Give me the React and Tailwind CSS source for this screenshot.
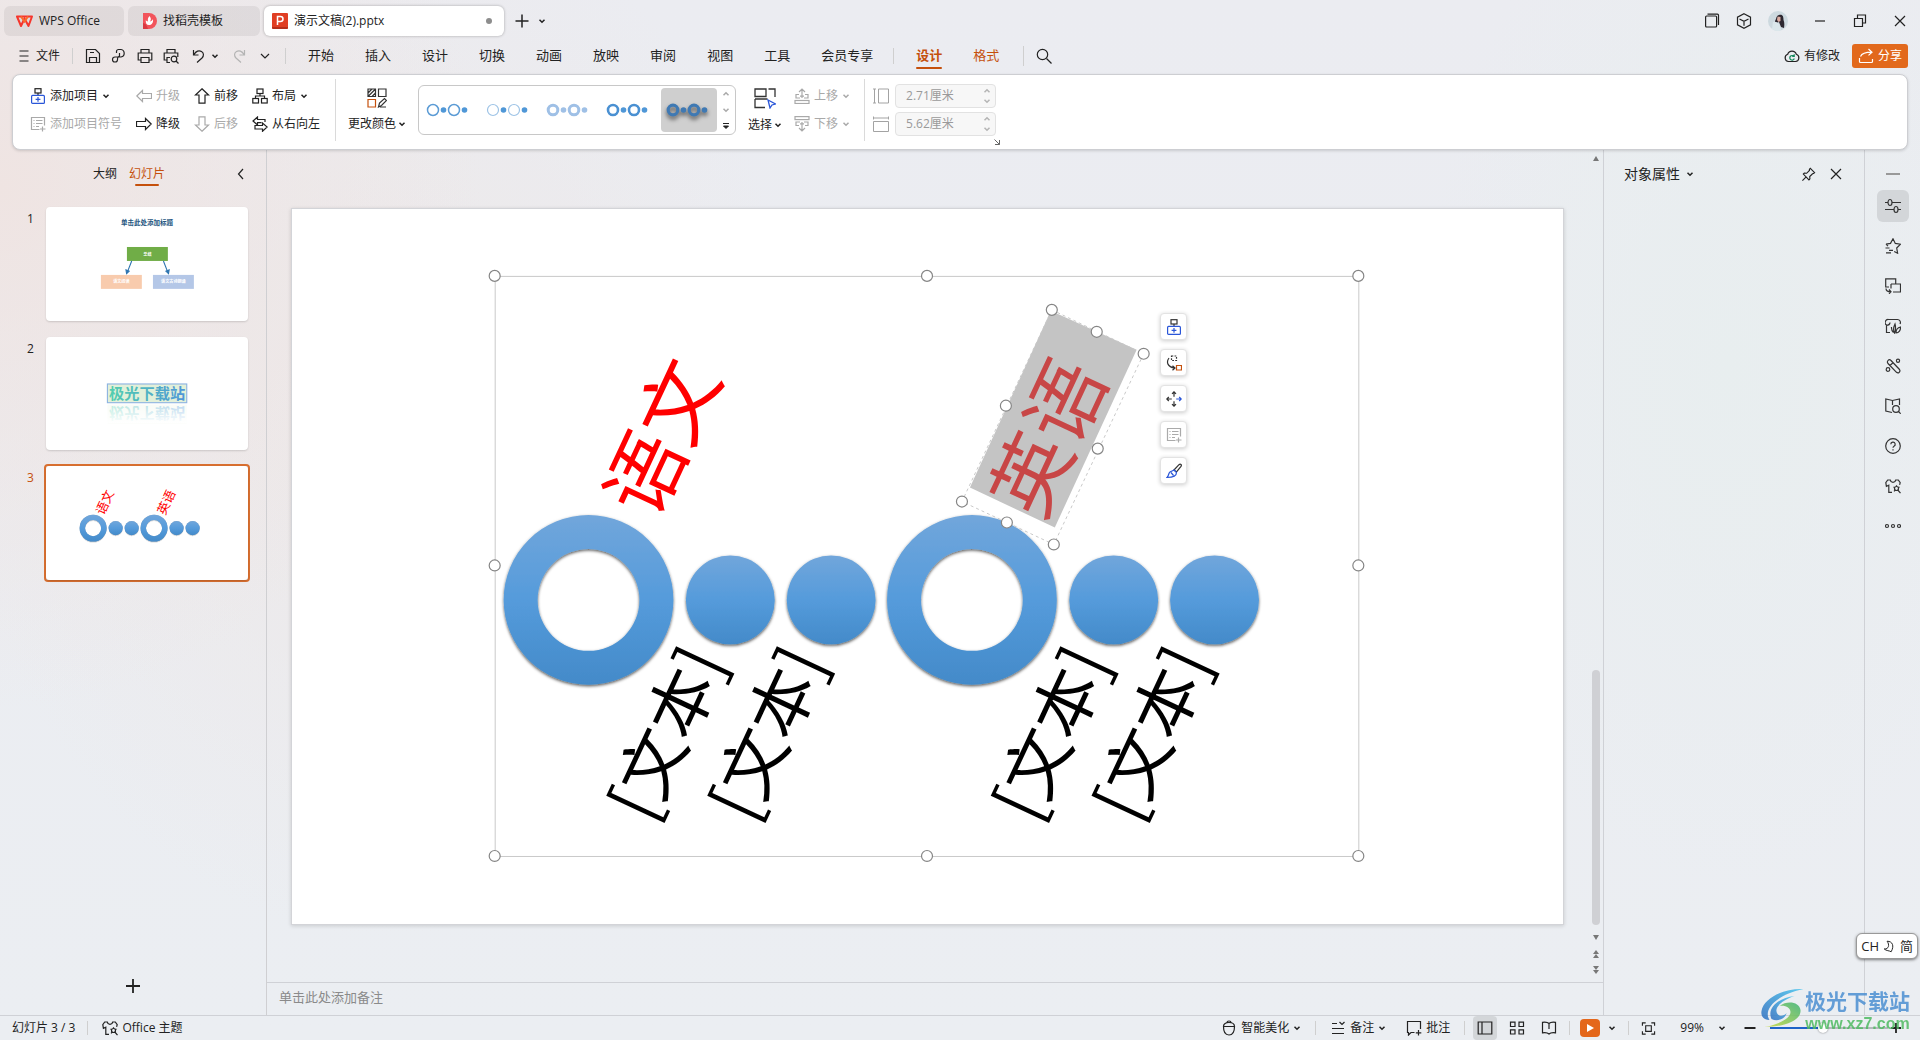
import React, { useState } from "react";

const MENU = ["开始", "插入", "设计", "切换", "动画", "放映", "审阅", "视图", "工具", "会员专享"];

function Icon({ size = 16, className = "", children, sw = 1.2 }) {
  return (
    <svg
      width={size}
      height={size}
      viewBox="0 0 16 16"
      fill="none"
      stroke="currentColor"
      strokeWidth={sw}
      className={`shrink-0 ${className}`}
      aria-hidden="true"
    >
      {children}
    </svg>
  );
}

function Chevron({ className = "" }) {
  return (
    <svg width="8" height="8" viewBox="0 0 8 8" fill="none" stroke="currentColor" strokeWidth="1.5" className={`shrink-0 ${className}`} aria-hidden="true">
      <path d="M1.5 2.7 4 5.2l2.5-2.5" />
    </svg>
  );
}

const addItem = (
  <>
    <rect x="5" y="0.7" width="6" height="4.3" />
    <path d="M8 5v2.5" />
    <g stroke="#2a56d8">
      <rect x="1.6" y="7.4" width="12.8" height="8" rx="1" />
      <path d="M8 9v4.8M5.6 11.4h4.8" />
    </g>
  </>
);

const addBullet = (
  <>
    <path d="M9.5 13.5h-8v-12h13v8" />
    <path d="M3.5 4.5h1M3.5 7.5h1M3.5 10.5h1M6 4.5h6.5M6 7.5h6.5M6 10.5h3M12.5 10.5v5M10 13h5.5" />
  </>
);

const shirt = (
  <>
    <path d="M7 14.3H3.8V7.2L1.4 8.3.8 4.6 2.7 2h2.6c.3 1.6 1.4 2.3 2.7 2.3S10.4 3.6 10.7 2h2.6l1.9 2.6-.6 2.2" />
    <circle cx="11.5" cy="10.5" r="2" />
    <path d="M11.5 7.2v1.3M8.5 9l1.3.6M14.5 9l-1.3.6M9 13.3l1.3-1.3M12.8 12l2.7 3.2" />
  </>
);

const icons = {
  arrowLeft: <path d="M.8 8l5.700-5.500v3h9v5h-9v3z" />,
  arrowRight: <path d="M15.2 8L9.5 2.5v3h-9v5h9v3z" />,
  arrowUp: <path d="M8 .8l6.500 6.200h-3.500v8.200H5V7H1.500z" />,
  arrowDown: <path d="M8 15.2l6.500-6.200h-3.500V.8H5V9H1.500z" />,
  layout: (
    <>
      <rect x="5" y="1" width="6" height="4.500" />
      <rect x=".8" y="10.500" width="5.700" height="4.500" />
      <rect x="9.500" y="10.500" width="5.700" height="4.500" />
      <path d="M8 5.500V8M3.500 10.500V8h9v2.500" />
    </>
  ),
  swap: <path d="M9.500 6.700H5.500V9L1 5l4.500-4v2.500H13V6M10.500 7v2.500H3V13h7.500v2.300L15.200 11z" />,
  moveUp: (
    <>
      <rect x="1" y="12.500" width="14" height="3" />
      <path d="M6 10H2V6.500h3M10 10h4V6.500h-3M8 1v9M5 4l3-3 3 3M6 8.200h4" />
    </>
  ),
  moveDown: (
    <>
      <rect x="1" y="0.600" width="14" height="3" />
      <path d="M6 6H2v3.500h3M10 6h4v3.500h-3M8 6v9M5 12l3 3 3-3M6 7.800h4" />
    </>
  ),
};

function ToolButton({ icon, label, chevron, disabled }) {
  return (
    <button type="button" disabled={disabled} className="flex h-5 items-center whitespace-nowrap text-[#222] disabled:text-[#a9a9a9]">
      <Icon>{icon}</Icon>
      <span className="ml-1">{label}</span>
      {chevron && <Chevron className="ml-1" />}
    </button>
  );
}

function TitleBar() {
  return (
    <header className="flex h-10 items-center pl-1 pt-0.5 text-xs text-[#222]">
      <button type="button" className="flex h-[30px] w-[120px] items-center rounded-md bg-black/6 pl-3">
        <svg width="17" height="13" viewBox="0 0 17 13" fill="none" stroke="#f5352c" strokeWidth="2" aria-hidden="true">
          <path d="M1 1.500h15L12.500 11 8.500 3.500 5 11z" strokeLinejoin="round" />
          <path d="M5 1.500l3.500 5 3.500-5" stroke="#fb6a2a" />
        </svg>
        <span className="ml-1.5">WPS Office</span>
      </button>
      <button type="button" className="ml-1 flex h-[30px] w-[132px] items-center rounded-md bg-black/6 pl-3.5">
        <svg width="15" height="16" viewBox="0 0 15 16" aria-hidden="true">
          <path d="M1 0h6a8 8 0 0 1 0 16H1z" fill="#f2545b" />
          <path d="M1 10c2 0 4 2 5 6H1z" fill="#d93a42" />
          <path d="M7.500 3c2 2.500 1.500 4 .5 5.500 1-.2 2.500-1.200 3-2.500.5 4-1.500 6-4 6S3.500 10 3.800 7c.6 1 1.400 1.400 2.200 1.500C5.500 6.500 6 4.500 7.500 3z" fill="#fff" />
        </svg>
        <span className="ml-1.5">找稻壳模板</span>
      </button>
      <div className="ml-1 flex h-[30px] w-60 items-center rounded-md bg-white pl-2 pr-3 shadow-[0_0_3px_rgba(0,0,0,0.3)]">
        <svg width="16" height="16" viewBox="0 0 16 16" aria-hidden="true">
          <rect width="16" height="16" rx="1" fill="#e03e23" />
          <path d="M0 14h16v1l-1 1H1l-1-1z" fill="#b52f1b" />
          <path d="M5.500 12V3.500h3a2.500 2.500 0 0 1 0 5h-3" fill="none" stroke="#fff" strokeWidth="1.500" />
        </svg>
        <span className="ml-1.5 flex-1">演示文稿(2).pptx</span>
        <span className="h-1.5 w-1.5 rounded-full bg-[#8d8d8d]" />
      </div>
      <button type="button" aria-label="新建标签" className="ml-2.5">
        <Icon sw={1.5}><path d="M8 1.500v13M1.500 8h13" /></Icon>
      </button>
      <button type="button" aria-label="标签列表" className="ml-2"><Chevron /></button>

      <div className="ml-auto flex items-center pr-3">
        <button type="button" aria-label="窗口">
          <Icon><rect x="1.600" y="3" width="11" height="11" rx="1" /><path d="M3.500 1.200h10a1 1 0 0 1 1 1V12" /></Icon>
        </button>
        <button type="button" aria-label="应用" className="ml-4">
          <Icon><path d="M8 .8l6.500 3.400v7.600L8 15.200l-6.500-3.400V4.200zM3.500 6L8 8.300 12.500 6M8 8.300v4.500" /></Icon>
        </button>
        <button type="button" aria-label="账号" className="ml-4">
          <svg width="20" height="20" viewBox="0 0 20 20" aria-hidden="true">
            <circle cx="10" cy="10" r="10" fill="#cdd9df" />
            <path d="M11 4c4-1 4.500 2 4.500 5 1 2 1 5 .5 8l-3-1-2-5c-4 2-5 0-3-3 .5-2 1-3.500 3-4z" fill="#2d2730" />
            <path d="M9.500 5.500l3 .5v4l-2 1-1.500-2z" fill="#d9aba0" />
            <path d="M5 11c3-1 6 1 7 4l1 4.500A10 10 0 0 1 4 18z" fill="#dbe7eb" />
          </svg>
        </button>
        <button type="button" aria-label="最小化" className="ml-6">
          <Icon><path d="M3 8h10" /></Icon>
        </button>
        <button type="button" aria-label="还原" className="ml-6">
          <Icon><path d="M2.500 5.500h8v8h-8zM5.500 5.500v-3.500h8v8h-3" /></Icon>
        </button>
        <button type="button" aria-label="关闭" className="ml-6">
          <Icon><path d="M3 3l10 10M13 3L3 13" /></Icon>
        </button>
      </div>
    </header>
  );
}

function MenuBar() {
  return (
    <nav className="flex h-[34px] items-center pb-0.5 pl-4 pr-3 text-xs text-[#222]">
      <button type="button" className="flex items-center">
        <Icon><path d="M3.500 3h9M3.500 8h9M3.500 13h9" /></Icon>
        <span className="ml-1">文件</span>
      </button>
      <span className="ml-3 h-4 w-px bg-[#cfcfcf]" />
      <div className="flex items-center">
        <button type="button" aria-label="保存" className="ml-3">
          <Icon><path d="M1.500 1.500h9l4 4v9h-13zM4.500 14.500v-5h7v5M5 4.500h4" /></Icon>
        </button>
        <button type="button" aria-label="输出" className="ml-2.5">
          <Icon><path d="M5.500 5V3.500a2 2 0 0 1 2-2h2.500a3.800 3.800 0 0 1 0 7.500H4a2.500 2.500 0 1 0 2.500 2.700c.2-1.700-.7-2.500 2-3.700V5" /></Icon>
        </button>
        <button type="button" aria-label="打印" className="ml-2.5">
          <Icon><path d="M4 5V1.500h8V5M4 12H1.200V5h13.600v7H12M4 9.500h8v5H4z" /></Icon>
        </button>
        <button type="button" aria-label="打印预览" className="ml-2.5">
          <Icon><path d="M4 5V1.500h8V5M4 12H1.200V5h13.600v4M7 14.500H4v-5h3" /><circle cx="11" cy="11" r="2.800" /><path d="M13 13l2.500 2.500" /></Icon>
        </button>
        <button type="button" aria-label="撤销" className="ml-3 flex items-center">
          <Icon><path d="M2.500 2v5h5M3 6.500C5 3 8 2 10.500 3.500S13 8 11 10l-5 4.500" /></Icon>
          <Chevron className="ml-1" />
        </button>
        <button type="button" aria-label="恢复" disabled className="ml-3 text-[#b4b4b4]">
          <Icon><path d="M13.500 2v5h-5M13 6.500C11 3 8 2 5.500 3.500S3 8 5 10l5 4.500" /></Icon>
        </button>
        <button type="button" aria-label="更多" className="ml-2.5">
          <Icon><path d="M4 6l4 4 4-4" /></Icon>
        </button>
      </div>
      <span className="ml-3 h-4 w-px bg-[#cfcfcf]" />
      <div className="ml-[22px] flex items-center gap-[31px] text-[13px]">
        {MENU.map((m) => (
          <button key={m} type="button" className="whitespace-nowrap">{m}</button>
        ))}
      </div>
      <span className="ml-5 h-4 w-px bg-[#cfcfcf]" />
      <div className="ml-[22px] flex items-center gap-[31px] text-[13px] text-[#c5500c]">
        <button type="button" className="relative whitespace-nowrap font-bold">
          设计
          <span className="absolute inset-x-0 -bottom-1 h-0.5 rounded bg-[#c5500c]" />
        </button>
        <button type="button" className="whitespace-nowrap">格式</button>
      </div>
      <span className="ml-6 h-5 w-px bg-[#cfcfcf]" />
      <button type="button" aria-label="搜索" className="ml-3">
        <Icon><circle cx="6.500" cy="6.500" r="5.200" /><path d="M10.500 10.500l5 5" /></Icon>
      </button>
      <button type="button" className="ml-auto flex items-center">
        <Icon>
          <path d="M4.500 13.500a3.700 3.700 0 0 1-.8-7.200 4.500 4.500 0 0 1 8.600 0 3.700 3.700 0 0 1-.8 7.200z" />
          <path d="M10 8.500a2.300 2.300 0 1 0 .3 2M8.200 8.300h2V6.300" stroke="#12875a" />
        </Icon>
        <span className="ml-1">有修改</span>
      </button>
      <button type="button" className="ml-3 flex h-6 w-14 items-center justify-center rounded-[3px] bg-[#e2691c] text-white">
        <Icon><path d="M1.500 10v3.500a1 1 0 0 0 1 1h11a1 1 0 0 0 1-1V11M2.500 8.500C4 5 8 4.200 13.500 4.200M10.500 1l3.500 3.200-3.500 3.200" /></Icon>
        <span className="ml-1">分享</span>
      </button>
    </nav>
  );
}

const STYLES = [
  { name: "样式1", ring: "#5b9bd5", w: 1.5, r: 5.5 },
  { name: "样式2", ring: "#9dc3e6", w: 1.2, r: 5.5 },
  { name: "样式3", ring: "#9fc0e6", w: 3, r: 4.8, dot: "#9fc0e6" },
  { name: "样式4", ring: "#4a90d2", w: 2.6, r: 5 },
  { name: "样式5", ring: "#3f79b3", w: 3.2, r: 4.8, dot: "#3f79b3", shadow: true },
];

function Gallery() {
  const [picked, setPicked] = useState(4);
  return (
    <div className="flex h-[50px] items-center rounded-md border border-[#c8c8c8] pl-0.5">
      <div className="flex gap-1">
        {STYLES.map((s, i) => (
          <button
            key={s.name}
            type="button"
            aria-label={s.name}
            onClick={() => setPicked(i)}
            className={`flex h-11 w-14 items-center rounded ${picked === i ? "bg-[#cfcfcf]" : ""}`}
          >
            <svg
              width="46"
              height="18"
              viewBox="0 0 46 18"
              className={s.shadow ? "ml-1 drop-shadow-[0_3px_2px_rgba(0,0,0,0.6)]" : "ml-1"}
              aria-hidden="true"
            >
              <g fill="none" stroke={s.ring} strokeWidth={s.w}>
                <circle cx="8" cy="9" r={s.r} />
                <circle cx="29" cy="9" r={s.r} />
              </g>
              <circle cx="18.500" cy="9" r="2.800" fill={s.dot || "#4f97d7"} />
              <circle cx="39.500" cy="9" r="2.800" fill={s.dot || "#4f97d7"} />
            </svg>
          </button>
        ))}
      </div>
      <div className="flex w-[18px] flex-col items-center gap-2 text-[#aaa]">
        <button type="button" aria-label="上一行"><Chevron className="rotate-180" /></button>
        <button type="button" aria-label="下一行"><Chevron /></button>
        <button type="button" aria-label="更多样式" className="text-[#222]">
          <svg width="8" height="8" viewBox="0 0 8 8" aria-hidden="true"><path d="M1 1.500h6M1.500 4h5L4 6.500z" fill="currentColor" stroke="currentColor" /></svg>
        </button>
      </div>
    </div>
  );
}

function SizeField({ id, label, value, icon }) {
  return (
    <div className="flex items-center text-[#a3a3a3]">
      <label htmlFor={id} aria-label={label}><Icon sw={1}>{icon}</Icon></label>
      <div className="ml-1.5 flex h-6 w-[101px] items-center rounded border border-[#e2e2e2] bg-[#f7f7f7] pr-1">
        <input id={id} defaultValue={value} disabled className="w-full min-w-0 bg-transparent pl-2.5 text-[#9a9a9a] outline-none" />
        <span className="flex flex-col gap-0.5 text-[#b5b5b5]">
          <Chevron className="rotate-180" />
          <Chevron />
        </span>
      </div>
    </div>
  );
}

function Ribbon() {
  return (
    <section className="relative z-10 mx-3 flex h-[76px] rounded-lg border border-[#cdced2] bg-white pb-2 pt-1 pl-[17px] text-xs shadow-[0_1px_3px_rgba(0,0,0,0.15)]">
      <div className="flex w-[106px] flex-col justify-center gap-2">
        <ToolButton icon={addItem} label="添加项目" chevron />
        <ToolButton icon={addBullet} label="添加项目符号" disabled />
      </div>
      <div className="flex w-[58px] flex-col justify-center gap-2">
        <ToolButton icon={icons.arrowLeft} label="升级" disabled />
        <ToolButton icon={icons.arrowRight} label="降级" />
      </div>
      <div className="flex w-[58px] flex-col justify-center gap-2">
        <ToolButton icon={icons.arrowUp} label="前移" />
        <ToolButton icon={icons.arrowDown} label="后移" disabled />
      </div>
      <div className="flex w-[83px] flex-col justify-center gap-2">
        <ToolButton icon={icons.layout} label="布局" chevron />
        <ToolButton icon={icons.swap} label="从右向左" />
      </div>
      <div className="w-px bg-[#dadada]" />
      <button type="button" className="ml-3 flex flex-col items-center justify-center gap-2 text-[#222]">
        <svg width="20" height="20" viewBox="0 0 20 20" fill="none" stroke="#333" strokeWidth="1.200" aria-hidden="true">
          <path d="M1 1h7.500v7.500H1zM1 5l4-4M1 8.500L8.500 1M5 8.500L8.500 5M11.500 1H19v7.500h-7.500z" />
          <path d="M1 11.500h7.500V19H1z" stroke="#c5500c" />
          <path d="M11.500 19l1-4 5-4.500 2 2-5 5zM13 19h6" />
        </svg>
        <span className="flex items-center leading-4">更改颜色<Chevron className="ml-0.5" /></span>
      </button>
      <div className="ml-3 flex items-center"><Gallery /></div>
      <button type="button" className="ml-3 flex flex-col items-center justify-center gap-2 text-[#222]">
        <svg width="22" height="21" viewBox="0 0 22 21" fill="none" stroke="#333" strokeWidth="1.300" aria-hidden="true">
          <path d="M1 1h11v7.500H1zM14.500 1H21v8M1 11v8.500h10M1 11h12.500" />
          <path d="M14 12l7.500 4-3.500 1-2 3z" stroke="#2a56d8" />
        </svg>
        <span className="flex items-center leading-4">选择<Chevron className="ml-0.5" /></span>
      </button>
      <div className="ml-3 flex flex-col justify-center gap-2">
        <ToolButton icon={icons.moveUp} label="上移" chevron disabled />
        <ToolButton icon={icons.moveDown} label="下移" chevron disabled />
      </div>
      <div className="ml-3.5 w-px bg-[#dadada]" />
      <div className="relative ml-2 flex flex-col justify-center gap-1">
        <SizeField id="shape-h" label="高度" value="2.71厘米" icon={<path d="M1.500 1v14M0 1h3M0 15h3M5.500 1h10v14h-10z" />} />
        <SizeField id="shape-w" label="宽度" value="5.62厘米" icon={<path d="M.5 2h15M.5 .5v3M15.500 .5v3M.5 5.500h15v10H.5z" />} />
        <svg width="6" height="6" viewBox="0 0 6 6" className="absolute -bottom-1 -right-1 text-[#666]" fill="none" stroke="currentColor" aria-hidden="true">
          <path d="M.5 .5l5 5M5.500 1v4.500H1" />
        </svg>
      </div>
    </section>
  );
}

// Smart art drawing, shared by the slide and its thumbnail
function SmartArt({ id, full }) {
  const groups = [0, 384];
  const labels = [376, 477, 761, 862];
  return (
    <>
      <defs>
        <linearGradient id={`${id}-blue`} x1="0" y1="0" x2="0" y2="1">
          <stop offset="0" stopColor="#71a6db" />
          <stop offset="0.5" stopColor="#559bdb" />
          <stop offset="1" stopColor="#438ac9" />
        </linearGradient>
        <filter id={`${id}-shadow`} x="-10%" y="-10%" width="120%" height="120%">
          <feDropShadow dx="0" dy="1.5" stdDeviation="1.5" floodColor="#000" floodOpacity="0.65" />
        </filter>
      </defs>
      {groups.map((dx) => (
        <g key={dx} transform={`translate(${dx} 0)`} fill={`url(#${id}-blue)`} filter={`url(#${id}-shadow)`}>
          <path
            fillRule="evenodd"
            d="M212 391.500a85 85 0 1 1 170 0a85 85 0 1 1 -170 0zM246 391.500a51 51 0 1 0 102 0a51 51 0 1 0 -102 0z"
          />
          <circle cx="439" cy="391.500" r="44.500" />
          <circle cx="540" cy="391.500" r="44.500" />
        </g>
      ))}
      {full && <path d="M760 102l86 39-82 178-85-40z" fill="#c4c4c4" />}
      <g textAnchor="middle" fontSize="80">
        <text transform="translate(371 229) rotate(-65)" y="29" fill="#ff0000">语文</text>
        <text transform="translate(758 229) rotate(-65)" y="29" fill={full ? "#c84646" : "#ff0000"}>英语</text>
      </g>
      {full && (
        <g textAnchor="middle" fontSize="67" fill="#000">
          {labels.map((x) => (
            <text key={x} transform={`translate(${x} 525) rotate(-65)`} y="24">[文本]</text>
          ))}
        </g>
      )}
    </>
  );
}

const OUTER = [[203, 67], [636, 67], [1068, 67], [203, 357], [1068, 357], [203, 648], [636, 648], [1068, 648]];
const INNER = [[761, 101], [806, 123], [853, 145], [715, 197], [807, 240], [671, 293], [716, 314], [763, 336]];

function Slide() {
  return (
    <div className="relative">
      <svg
        viewBox="0 0 1273 716"
        className="block w-full border border-[#d3d4d8] bg-white font-['Noto_Sans_CJK_SC',sans-serif] shadow-[0_1px_4px_rgba(0,0,0,0.15)]"
      >
        <SmartArt id="slide" full />
        <rect x="203.500" y="67.500" width="865" height="581" fill="none" stroke="#c9c9c9" />
        <path d="M761 101l92 44-90 191-92-43z" fill="none" stroke="#c9c9c9" strokeDasharray="3 3" />
        <g fill="#fff" stroke="#858585" strokeWidth="1.200">
          {[...OUTER, ...INNER].map(([x, y]) => (
            <circle key={`${x}-${y}`} cx={x} cy={y} r="5.500" />
          ))}
        </g>
      </svg>
      <div className="absolute left-[68.3%] top-[14.7%] flex flex-col gap-[9px] text-[#333]">
        <FloatButton label="添加项目">{addItem}</FloatButton>
        <FloatButton label="更改位置">
          <path d="M5.500 1h5v4.500h-5z" strokeDasharray="1.800 1.200" />
          <path d="M3 3C0 7 1.500 12 8.500 13M6.500 10.800L9 13l-2.500 2.200" />
          <path d="M10.500 10.500h5V15h-5z" stroke="#c5500c" />
        </FloatButton>
        <FloatButton label="移动">
          <path d="M8 .8v5M6 2.800l2-2 2 2M8 10.200v5M6 13.200l2 2 2-2M.8 8h5M2.800 6l-2 2 2 2" />
          <path d="M10.200 8h5M13.200 6l2 2-2 2" stroke="#2a56d8" />
        </FloatButton>
        <FloatButton label="项目符号" gray>{addBullet}</FloatButton>
        <FloatButton label="样式">
          <path d="M8 7l5-5.300c1.500-1.300 3 .2 2 1.700L10.500 9z" />
          <path d="M8 7l2.500 2.500c0 3.500-3 5-9.500 5 2-1.500 1-4 3-5.500C5.500 8 6.500 8 8 7zM5 9.500l2.500 3" stroke="#2a56d8" />
        </FloatButton>
      </div>
    </div>
  );
}

function FloatButton({ label, gray, children }) {
  return (
    <button
      type="button"
      aria-label={label}
      className={`flex h-[27px] w-[27px] items-center justify-center rounded border border-[#e3e3e3] bg-white shadow-[0_1px_4px_rgba(0,0,0,0.2)] ${gray ? "text-[#aaa]" : ""}`}
    >
      <Icon>{children}</Icon>
    </button>
  );
}

function Thumb({ n, active, children }) {
  return (
    <li className="flex items-start">
      <span className={`w-[44px] shrink-0 pl-[27px] pt-1.5 text-xs ${active ? "text-[#c5500c]" : "text-[#222]"}`}>{n}</span>
      <button
        type="button"
        aria-label={`幻灯片 ${n}`}
        className={`w-[206px] rounded border-2 ${active ? "border-[#d86f30]" : "border-transparent"}`}
      >
        <svg viewBox="0 0 1273 716" className="block w-full rounded-sm bg-white font-['Noto_Sans_CJK_SC',sans-serif] shadow-[0_1px_2px_rgba(0,0,0,0.15)]">
          {children}
        </svg>
      </button>
    </li>
  );
}

function LeftPanel() {
  return (
    <aside className="flex w-[267px] shrink-0 flex-col border-r border-[#cfcfd2]">
      <div className="flex h-12 items-center pl-[93px] pr-[17px] text-xs text-[#222]">
        <button type="button">大纲</button>
        <button type="button" className="relative ml-3 text-[#c5500c]">
          幻灯片
          <span className="absolute inset-x-1.5 -bottom-1 h-0.5 rounded bg-[#c5500c]" />
        </button>
        <button type="button" aria-label="收起" className="ml-auto">
          <Icon><path d="M10 3L5.500 8l4.500 5" /></Icon>
        </button>
      </div>
      <ul className="mt-[7px] flex flex-col gap-3">
        <Thumb n={1}>
          <text x="636" y="115" textAnchor="middle" fontSize="41" fontWeight="bold" fill="#24557e">单击此处添加标题</text>
          <rect x="510" y="252" width="258" height="88" fill="#70ad47" />
          <rect x="346" y="428" width="258" height="88" fill="#f8cbad" />
          <rect x="674" y="428" width="258" height="88" fill="#b4c7e7" />
          <g stroke="#2e75b0" strokeWidth="7" fill="#2e75b0">
            <path d="M540 340l-28 72M740 340l28 72" />
            <path d="M504 396l4 24 16-16zM776 396l-4 24-16-16z" />
          </g>
          <g fill="#fff" fontSize="26" textAnchor="middle" fontWeight="bold">
            <text x="639" y="306">总结</text>
            <text x="475" y="482">语文阅读</text>
            <text x="803" y="482">语文古诗朗诵</text>
          </g>
        </Thumb>
        <Thumb n={2}>
          <defs>
            <linearGradient id="wordart" x1="0" y1="0" x2="1" y2="0">
              <stop offset="0" stopColor="#53cfae" />
              <stop offset="1" stopColor="#4f96d8" />
            </linearGradient>
            <linearGradient id="fade" x1="0" y1="0" x2="0" y2="1">
              <stop offset="0" stopColor="#fff" stopOpacity="0.6" />
              <stop offset="1" stopColor="#fff" />
            </linearGradient>
          </defs>
          <rect x="387" y="296" width="500" height="118" fill="#e2f0d9" stroke="#8db3e0" strokeWidth="7" />
          <text x="637" y="390" textAnchor="middle" fontSize="96" fontWeight="bold" fill="url(#wordart)">极光下载站</text>
          <g transform="translate(0 840) scale(1 -1)">
            <rect x="387" y="296" width="500" height="118" fill="#eef6ea" />
            <text x="637" y="390" textAnchor="middle" fontSize="96" fontWeight="bold" fill="url(#wordart)" aria-hidden="true">极光下载站</text>
          </g>
          <rect x="375" y="422" width="524" height="124" fill="url(#fade)" />
        </Thumb>
        <Thumb n={3} active><SmartArt id="thumb" /></Thumb>
      </ul>
      <button type="button" aria-label="新建幻灯片" className="mb-[21px] mt-auto self-center text-[#222]">
        <Icon sw={1.8}><path d="M8 1v14M1 8h14" /></Icon>
      </button>
    </aside>
  );
}

function ScrollBar() {
  return (
    <div className="flex w-[15px] shrink-0 flex-col items-center pb-2 pt-1.5 text-[#777]">
      <svg width="6" height="5" viewBox="0 0 6 5" fill="currentColor" aria-hidden="true"><path d="M3 0l3 5H0z" /></svg>
      <div className="flex-[2]" />
      <div className="w-2 flex-1 rounded bg-[#cfd0d4]" />
      <svg width="6" height="5" viewBox="0 0 6 5" fill="currentColor" className="mt-2.5" aria-hidden="true"><path d="M3 5l3-5H0z" /></svg>
      <svg width="6" height="8" viewBox="0 0 6 8" fill="currentColor" className="mt-2.5" aria-hidden="true"><path d="M3 0l3 4H0zM3 4l3 4H0z" /></svg>
      <svg width="6" height="8" viewBox="0 0 6 8" fill="currentColor" className="mt-2" aria-hidden="true"><path d="M3 4l3-4H0zM3 8l3-4H0z" /></svg>
    </div>
  );
}

const SIDE = [
  { label: "属性", icon: <><path d="M0 4.500h3M7 4.500h9M0 11.500h9M13 11.500h3" /><ellipse cx="5" cy="4.500" rx="2" ry="3" /><ellipse cx="11" cy="11.500" rx="2" ry="3" /></> },
  { label: "动画", icon: <path d="M1 6.200l4.500-.8L8 .8l2.300 4.600 5.200.8-3.800 3.800.9 5.200-3.400-1.700M1 6.200l2 2M.5 10h4M4 12.300h4M1 14.800h5" /> },
  { label: "切换", icon: <path d="M4 9H.7V.8h10V6M6 6h9.500v8H8M6 6v4.500M1 10.500C1 13 3 13.800 6 13.800M4 11.500l2 2.300-2 2" /> },
  { label: "模板", icon: <><path d="M5 14.500H1.500V7A3 3 0 0 1 3.500 1.500h9A3 3 0 0 1 15 6M1 7.500c2.500 0 4-1.500 4-3" /><path d="M9.500 15c-1.500-3-1.500-5 .5-9 1 4 1 6-.5 9zM11 15c0-3 2-5.500 4.500-6 .3 3-1.500 6-4.500 6zM8.500 14.500C7 13 6.300 11 6.500 9" /></> },
  { label: "美化", icon: <><path d="M3 2.500c1-1.300 2-1.300 3 0l8.500 9c.8 1.200.5 2-.3 2.800s-1.800.8-2.700 0L3 5.500c-.8-1-.8-2 0-3zM5 7.500L8 4.700" /><circle cx="13" cy="2.800" r="1.600" /><circle cx="3" cy="11.500" r="1.800" /></> },
  { label: "素材", icon: <><path d="M7 14.500L.8 13V1l6.700 1.500L14.500 1v6M7.500 2.500V7" /><circle cx="11" cy="11" r="3.300" /><path d="M13.500 13.500l2.200 2.200" /></> },
  { label: "帮助", icon: <><circle cx="8" cy="8" r="7.300" /><path d="M5.800 6.200a2.200 2.200 0 1 1 3.200 2c-.8.500-1 .8-1 1.600M8 11.300v1.200" /></> },
  { label: "主题", icon: shirt },
  { label: "更多", icon: <><circle cx="2" cy="8" r="1.500" /><circle cx="8" cy="8" r="1.500" /><circle cx="14" cy="8" r="1.500" /></> },
];

function RightPanels() {
  return (
    <>
      <aside className="w-[261px] shrink-0 border-l border-[#cfd1d6]">
        <div className="flex h-12 items-center pl-5 pr-5 text-[#222]">
          <button type="button" className="flex items-center text-sm">
            对象属性
            <Chevron className="ml-1.5" />
          </button>
          <button type="button" aria-label="固定" className="ml-auto">
            <Icon size={15}><path d="M10 1.500L14.500 6l-1.200 1-1 .2-3 3 .2 2.500-1 1L2.500 7.500l1-1L6 6.700l3-3V2.500zM5.500 10.500L1.500 14.500" /></Icon>
          </button>
          <button type="button" aria-label="关闭面板" className="ml-3">
            <Icon><path d="M3 3l10 10M13 3L3 13" /></Icon>
          </button>
        </div>
      </aside>
      <aside className="flex w-14 shrink-0 flex-col items-center border-l border-[#cfd1d6] text-[#333]">
        <span className="mb-[15px] mt-[23px] h-0.5 w-3.5 bg-[#999]" />
        <div className="flex flex-col gap-2">
          {SIDE.map((s, i) => (
            <button key={s.label} type="button" aria-label={s.label} className={`flex h-8 w-8 items-center justify-center rounded-md ${i === 0 ? "bg-[#d3d6d9]" : ""}`}>
              <Icon>{s.icon}</Icon>
            </button>
          ))}
        </div>
      </aside>
    </>
  );
}

function StatusBar() {
  const [zoom, setZoom] = useState(44);
  return (
    <footer className="flex h-[25px] items-center border-t border-[#cfd1d6] pl-3 pr-4 text-xs text-[#222]">
      <span>幻灯片 3 / 3</span>
      <span className="ml-3 h-3.5 w-px bg-[#cfcfcf]" />
      <button type="button" className="ml-3.5 flex items-center">
        <Icon>{shirt}</Icon>
        <span className="ml-1">Office 主题</span>
      </button>
      <div className="ml-auto flex h-full items-center">
        <button type="button" className="flex items-center">
          <Icon><path d="M2.500 6.500C2.500 12 4 15 8 15s5.500-3 5.500-8.500zM2.500 6.500C2.500 3.500 5 2.500 8 2.500s5.500 1 5.500 4M6 2.500c0-2 4-2 4 0" /></Icon>
          <span className="ml-1">智能美化</span>
          <Chevron className="ml-1" />
        </button>
        <span className="mx-3.5 h-3.5 w-px bg-[#cfcfcf]" />
        <button type="button" className="flex items-center">
          <Icon><path d="M2 3.500h5M2 8.500h12M2 13.500h12M9.500 2l2.500 2.500L14.500 2" /></Icon>
          <span className="ml-1">备注</span>
          <Chevron className="ml-1" />
        </button>
        <button type="button" className="ml-5 flex items-center">
          <Icon><path d="M8.500 12.500H5l-2.500 2.500v-2.500H1.500v-11h13V9M12.500 10v5.500M9.800 12.800h5.500" /></Icon>
          <span className="ml-1">批注</span>
        </button>
        <span className="ml-3.5 h-3.5 w-px bg-[#cfcfcf]" />
        <button type="button" aria-label="普通视图" className="ml-2 flex h-full w-6 items-center justify-center rounded bg-[#d3d6d9]">
          <Icon><path d="M1.200 2h13.600v12H1.200zM5 2v12" /></Icon>
        </button>
        <button type="button" aria-label="浏览视图" className="ml-3">
          <Icon><path d="M1.500 2.200H6v4.300H1.500zM10 2.200h4.500v4.300H10zM1.500 9.800H6V14H1.500zM10 9.800h4.500V14H10z" /></Icon>
        </button>
        <button type="button" aria-label="阅读视图" className="ml-4">
          <Icon><path d="M8 3.500C6.500 2 4 2 1.500 2.300v10.500C4 12.500 6.500 12.500 8 14c1.500-1.500 4-1.500 6.500-1.200V2.300C12 2 9.500 2 8 3.500zM8 3.500V9" /></Icon>
        </button>
        <span className="ml-3 h-3.5 w-px bg-[#cfcfcf]" />
        <button type="button" aria-label="放映" className="ml-2.5 flex h-[18px] w-5 items-center justify-center rounded-sm bg-[#e4671b]">
          <svg width="7" height="8" viewBox="0 0 7 8" fill="#fff" aria-hidden="true"><path d="M0 0l7 4-7 4z" /></svg>
        </button>
        <button type="button" aria-label="放映选项" className="ml-2 flex"><Chevron /></button>
        <span className="ml-3 h-3.5 w-px bg-[#cfcfcf]" />
        <button type="button" aria-label="适应窗口" className="ml-3">
          <Icon size={15}><path d="M1.500 5V2H5M11 2h3.500v3M14.500 11v3H11M5 14H1.500v-3M5 5h6v6H5z" /></Icon>
        </button>
        <button type="button" className="ml-6 flex items-center">
          99%
          <Chevron className="ml-3.5" />
        </button>
        <button type="button" aria-label="缩小" className="ml-4"><Icon sw={2}><path d="M2.500 8h11" /></Icon></button>
        <input
          type="range"
          aria-label="缩放"
          value={zoom}
          onChange={(e) => setZoom(e.target.value)}
          className="ml-3 h-0.5 w-[118px] appearance-none bg-[linear-gradient(to_right,#1f63c8_44%,#b5b8bd_44%)] [&::-webkit-slider-thumb]:h-2.5 [&::-webkit-slider-thumb]:w-2.5 [&::-webkit-slider-thumb]:appearance-none [&::-webkit-slider-thumb]:rounded-full [&::-webkit-slider-thumb]:bg-white [&::-webkit-slider-thumb]:shadow-[0_0_2px_rgba(0,0,0,0.5)]"
        />
        <button type="button" aria-label="放大"><Icon sw={1.8}><path d="M8 3v10M3 8h10" /></Icon></button>
      </div>
    </footer>
  );
}

function Watermark() {
  return (
    <div className="pointer-events-none absolute bottom-2 right-2.5 z-20 flex items-center opacity-85">
      <svg width="45" height="40" viewBox="0 0 44 40" aria-hidden="true">
        <defs>
          <linearGradient id="wm-blue" x1="0" y1="1" x2="1" y2="0">
            <stop offset="0" stopColor="#2f6fc0" />
            <stop offset="1" stopColor="#45c3ee" />
          </linearGradient>
          <linearGradient id="wm-green" x1="0" y1="1" x2="1" y2="0">
            <stop offset="0" stopColor="#c6d93c" />
            <stop offset="1" stopColor="#3bb273" />
          </linearGradient>
        </defs>
        <path d="M43 1C24 0 3 10 1 23c-1 6 3 9 8 9-6-9 3-24 34-31z" fill="url(#wm-blue)" />
        <path d="M11 31C6 20 18 10 34 8 20 13 13 20 17 26c2 3 7 2 9-1-1 6-9 9-15 6z" fill="url(#wm-blue)" />
        <path d="M19 18c8-6 20-4 21 4 1 9-13 17-36 17 16-3 26-9 26-15 0-4-5-7-11-6z" fill="url(#wm-green)" />
      </svg>
      <div className="flex flex-col items-center">
        <span className="font-['Noto_Sans_CJK_SC',sans-serif] text-[21px] font-bold leading-8 text-[#4c8fd2]">极光下载站</span>
        <span className="font-['Liberation_Sans',sans-serif] text-base font-bold leading-4 text-[#4fbb62]">www.xz7.com</span>
      </div>
    </div>
  );
}

export default function App() {
  return (
    <div className="relative flex min-h-screen flex-col bg-[radial-gradient(ellipse_25%_50%_at_0%_18%,#efe4e2_0%,transparent_100%),radial-gradient(ellipse_22%_50%_at_20%_40%,#ede8e8_0%,transparent_100%),radial-gradient(ellipse_16%_50%_at_90%_35%,#e8eeef_0%,transparent_100%),linear-gradient(to_bottom,#ebecf1,#ebeef2)] font-['Open_Sans','Noto_Sans_CJK_SC',sans-serif] leading-none">
      <TitleBar />
      <MenuBar />
      <Ribbon />
      <main className="flex flex-1">
        <LeftPanel />
        <div className="flex min-w-0 flex-1 flex-col">
          <div className="flex flex-1">
            <div className="min-w-0 flex-1 px-6 pt-[58px]"><Slide /></div>
            <ScrollBar />
          </div>
          <div className="flex h-[33px] items-center border-t border-[#cfd1d6] pb-1 pl-3">
            <input aria-label="备注" placeholder="单击此处添加备注" className="w-full bg-transparent text-[13px] outline-none placeholder:text-[#8a8a8a]" />
          </div>
        </div>
        <RightPanels />
      </main>
      <StatusBar />
      <div className="absolute bottom-[81px] right-[2px] z-20 flex h-[26px] items-center gap-1 rounded-md border border-[#999] bg-white px-1 text-[13px] text-[#222] shadow-[0_1px_3px_rgba(0,0,0,0.5)]">
        <span>CH</span>
        <Icon size={13}><path d="M5 1.500c7 0 9 6 5 13-2-1.500-6-1-8.500-3.500C7 11.500 8.500 6 5 1.500z" /></Icon>
        <span>简</span>
      </div>
      <Watermark />
    </div>
  );
}
